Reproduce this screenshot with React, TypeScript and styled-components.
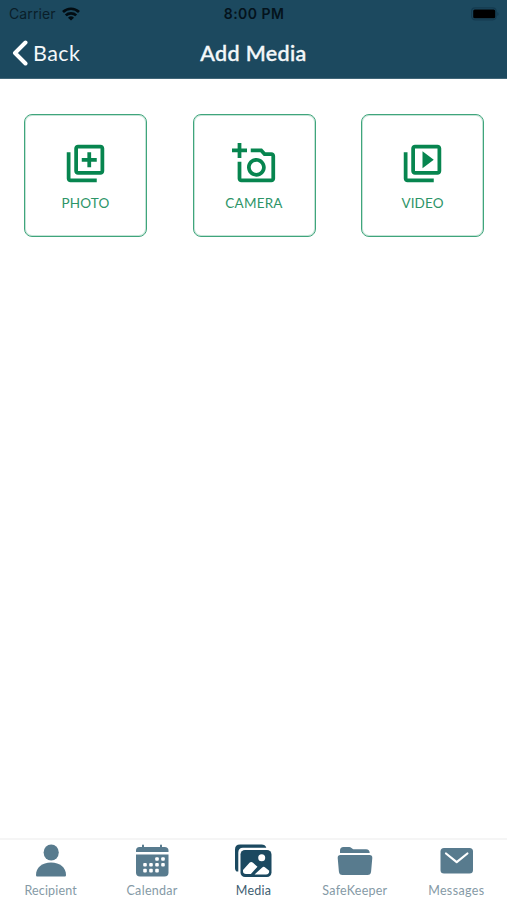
import React from "react";
import styled, { createGlobalStyle } from "styled-components";
import { MdOutlineLibraryAdd, MdOutlineAddAPhoto, MdOutlineVideoLibrary } from "react-icons/md";

const GlobalStyle = createGlobalStyle`
  * { box-sizing: border-box; }
  body { margin: 0; background: #fff; font-family: Lato, "Open Sans", sans-serif; }
  button { font: inherit; padding: 0; margin: 0; border: 0; background: none; }
`;

const Screen = styled.div`
  display: flex;
  flex-direction: column;
  width: 507px;
  height: 900px;
  overflow: hidden;
`;

const Header = styled.header`
  height: 79px;
  flex: none;
  background: #1c495f;
  border-bottom: 1px solid #416678;
`;

const StatusBar = styled.div`
  display: grid;
  grid-template-columns: 1fr auto 1fr;
  align-items: center;
  height: 27px;
  padding: 0 8px 0 9px;
  font-family: Inter, sans-serif;
  color: #04131c;
`;

const Carrier = styled.div`
  display: flex;
  align-items: center;
  gap: 6px;
  font-size: 14px;
  letter-spacing: 0.12px;
  color: #0a1e29;
`;

const Clock = styled.div`
  font-size: 14px;
  font-weight: 600;
  letter-spacing: 0.45px;
`;

const Battery = styled.svg`
  justify-self: end;
`;

const NavBar = styled.div`
  display: grid;
  grid-template-columns: 1fr auto 1fr;
  align-items: center;
  height: 51px;
  padding: 0 12px;
  color: #f4f8fa;
`;

const Back = styled.button`
  display: flex;
  align-items: center;
  justify-self: start;
  gap: 5px;
  height: 50px;
  color: #f4f8fa;
  font-size: 21.5px;
  letter-spacing: 0.45px;
`;

const Title = styled.h1`
  margin: 0;
  font-size: 21.5px;
  font-weight: 500;
  letter-spacing: 0.35px;
  line-height: 50px;
  -webkit-text-stroke: 0.4px currentColor;
`;

const Content = styled.main`
  flex: 1;
  display: flex;
  justify-content: space-between;
  align-items: flex-start;
  padding: 35px 23px 0 24px;
`;

const MediaCard = styled.button`
  display: flex;
  flex-direction: column;
  align-items: center;
  width: 123px;
  height: 123px;
  padding-top: 26px;
  border: 1px solid #3fa57c;
  border-radius: 8px;
  box-shadow: inset 0 0 0 1px rgba(63, 165, 124, 0.3);
  color: #07854f;
`;

const CardLabel = styled.span<{ $spacing: number }>`
  margin-top: 9px;
  font-size: 13.5px;
  line-height: 17px;
  letter-spacing: ${(p) => p.$spacing}px;
  color: #2d9568;
`;

const TabBar = styled.nav`
  display: grid;
  grid-template-columns: repeat(5, 1fr);
  height: 62px;
  flex: none;
  border-top: 2px solid #f5f5f5;
`;

const Tab = styled.button<{ $active?: boolean }>`
  display: flex;
  flex-direction: column;
  align-items: center;
  padding-top: 1px;
  color: ${(p) => (p.$active ? "#1b4960" : "#587b8e")};
`;

const TabLabel = styled.span<{ $active?: boolean; $spacing: number }>`
  margin-top: 6px;
  font-size: 12.5px;
  line-height: 16px;
  letter-spacing: ${(p) => p.$spacing}px;
  color: ${(p) => (p.$active ? "#3f6072" : "#859aa6")};
`;

const TabIcon = ({ children }: { children: React.ReactNode }) => (
  <svg width="40" height="36" viewBox="0 0 40 36" fill="currentColor">
    {children}
  </svg>
);

const WifiIcon = () => (
  <svg width="18" height="14" viewBox="0 0 18 14" fill="none" stroke="#020c12" strokeWidth="2.7">
    <path d="M1 5a11.5 11.5 0 0 1 16 0M3.8 8.4a7.5 7.5 0 0 1 10.4 0" />
    <path d="M9 13.5 6 10.7a4.3 4.3 0 0 1 6 0Z" fill="#020c12" stroke="none" />
  </svg>
);

const PersonIcon = () => (
  <TabIcon>
    <ellipse cx="20.2" cy="11.5" rx="7.6" ry="8" />
    <path d="M5 34C5 26.500 11 21.500 20 21.500s15 5 15 12.500c0 1-.6 1.500-1.500 1.500H6.500c-.9 0-1.500-.5-1.500-1.500Z" />
  </TabIcon>
);

const dots = [
  [25, 18], [31, 18],
  [13, 23.8], [19, 23.8], [25, 23.8], [31, 23.8],
  [13, 29.600], [19, 29.600], [25, 29.600],
];

const CalendarIcon = () => (
  <TabIcon>
    <path d="M4 11V9.500Q4 6 7.500 6H10V4.500q0-1 1-1t1 1V6h16V4.500q0-1 1-1t1 1V6h2.500Q36.500 6 36.500 9.500V11Z" />
    <path d="M4 13.500h32.500v18q0 4-4 4H8q-4 0-4-4Z" />
    {dots.map(([x, y]) => (
      <rect key={`${x}-${y}`} x={x - 1.800} y={y - 1.800} width="3.600" height="3.600" rx="1" fill="#fff" />
    ))}
  </TabIcon>
);

const GalleryIcon = () => (
  <TabIcon>
    <path d="M3.700 30.500C2.600 29.800 2 28.700 2 27V8.500Q2 3.500 7 3.500h21.500q3.800 0 4.800 3.300H10q-4.700 0-4.700 4.700v19Z" />
    <rect x="7.500" y="9" width="31" height="27" rx="4.500" />
    <circle cx="28.700" cy="16.700" r="3.500" fill="#fff" />
    <path d="m10 29 6.500-7.200q1.700-1.600 3.500 0l4.500 3.900-6.600 7.300H13q-3 0-3-2.700Z" fill="#fff" />
    <path d="m21.500 33.500 7.700-7q1.500-1.500 3 0l4 3.200q.1 3.800-3.200 3.800Z" fill="#fff" />
  </TabIcon>
);

const FolderIcon = () => (
  <TabIcon>
    <path d="M5 12V9.500Q5 6 8.500 6h5.700q1.200 0 2.300.9l1 .8q.8.500 1.800.500H31q3.700 0 3.700 3.800Z" />
    <path d="M5.500 14h29q3 0 2.800 3l-1.200 13.500q-.3 3.500-3.600 3.500h-25q-3.300 0-3.600-3.500L2.700 17q-.2-3 2.800-3Z" />
  </TabIcon>
);

const MailIcon = () => (
  <TabIcon>
    <rect x="4.500" y="7" width="32.500" height="25.500" rx="3.500" />
    <path d="m10 12.500 10.700 8.700 10.700-8.700" fill="none" stroke="#fff" strokeWidth="2.200" strokeLinecap="round" strokeLinejoin="round" />
  </TabIcon>
);

const cards = [
  { label: "PHOTO", Icon: MdOutlineLibraryAdd, spacing: 0.15 },
  { label: "CAMERA", Icon: MdOutlineAddAPhoto, spacing: 0.2 },
  { label: "VIDEO", Icon: MdOutlineVideoLibrary, spacing: 0.1 },
];

const tabs = [
  { label: "Recipient", Icon: PersonIcon, spacing: 0.15 },
  { label: "Calendar", Icon: CalendarIcon, spacing: 0.3 },
  { label: "Media", Icon: GalleryIcon, spacing: 0.25, active: true },
  { label: "SafeKeeper", Icon: FolderIcon, spacing: 0.25 },
  { label: "Messages", Icon: MailIcon, spacing: 0.35 },
];

export default function App() {
  return (
    <Screen>
      <GlobalStyle />
      <Header>
        <StatusBar>
          <Carrier>
            Carrier <WifiIcon />
          </Carrier>
          <Clock>8:00 PM</Clock>
          <Battery width="29" height="14" viewBox="0 0 29 14">
            <rect x="1.600" y=".8" width="24.500" height="12" rx="3.500" fill="none" stroke="#143b50" strokeWidth="1.200" />
            <rect x="3.200" y="2.500" width="22" height="8.700" rx="1.500" fill="#000" />
            <path d="M27.300 5v4q1.300-.7 1.300-2t-1.300-2Z" fill="#143b50" />
          </Battery>
        </StatusBar>
        <NavBar>
          <Back>
            <svg width="16" height="26" viewBox="0 0 16 26" fill="none" stroke="#fff" strokeWidth="4" strokeLinecap="round" strokeLinejoin="round">
              <path d="M13.500 2.500 3 13l10.500 10.500" />
            </svg>
            Back
          </Back>
          <Title>Add Media</Title>
        </NavBar>
      </Header>
      <Content>
        {cards.map(({ label, Icon, spacing }) => (
          <MediaCard key={label}>
            <Icon size={45} />
            <CardLabel $spacing={spacing}>{label}</CardLabel>
          </MediaCard>
        ))}
      </Content>
      <TabBar>
        {tabs.map(({ label, Icon, spacing, active }) => (
          <Tab key={label} $active={active}>
            <Icon />
            <TabLabel $active={active} $spacing={spacing}>{label}</TabLabel>
          </Tab>
        ))}
      </TabBar>
    </Screen>
  );
}
